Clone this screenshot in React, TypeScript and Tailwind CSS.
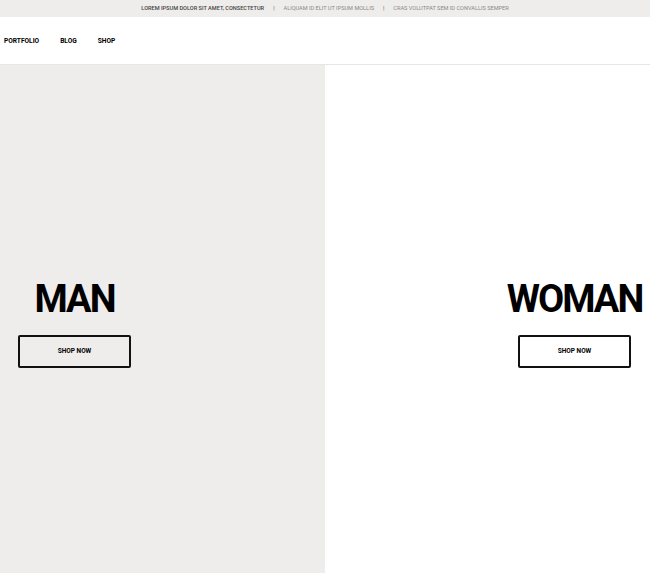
import React from "react";

const topLinks = [
  { text: "Lorem ipsum dolor sit amet, consectetur", dark: true },
  { text: "Aliquam id elit ut ipsum mollis", dark: false },
  { text: "Cras volutpat sem id convallis semper", dark: false },
];

function Panel({ title, side }: { title: string; side: "left" | "right" }) {
  return (
    <div
      className={`flex h-full items-center ${
        side === "left" ? "justify-start bg-[#eeedeb] pl-[18px]" : "justify-end bg-white pr-[19px]"
      }`}
    >
      <div className="flex w-[113px] flex-col items-center pt-[10px]">
        <h2 className="whitespace-nowrap text-[38px] font-bold leading-[38px] tracking-[-2px] text-black">
          {title}
        </h2>
        <button className="mt-[17px] flex h-[33px] w-[113px] items-center justify-center rounded-[2px] border-2 border-[#111] text-[6.5px] font-bold uppercase text-black">
          Shop now
        </button>
      </div>
    </div>
  );
}

export default function App() {
  return (
    <div className="flex h-[573px] w-[650px] flex-col overflow-hidden bg-white font-['Roboto',sans-serif]">
      {/* top strip */}
      <div className="flex h-[17px] shrink-0 items-center justify-center gap-[8px] bg-[#eeedeb] text-[5.6px] uppercase">
        {topLinks.map((l, i) => (
          <React.Fragment key={l.text}>
            {i > 0 && <span className="px-[1px] text-[#555]">|</span>}
            <span className={l.dark ? "font-medium text-[#444]" : "text-[#888]"}>{l.text}</span>
          </React.Fragment>
        ))}
      </div>

      {/* header */}
      <header className="flex h-[48px] shrink-0 items-center gap-[21px] border-b border-[#e6e6e6] pl-[4px] pt-[2px]">
        <a className="text-[6.6px] font-bold uppercase text-black">Portfolio</a>
        <a className="text-[6.6px] font-bold uppercase text-black">Blog</a>
        <a className="text-[6.6px] font-bold uppercase text-black">Shop</a>
      </header>

      {/* split hero */}
      <main className="grid flex-1 grid-cols-[325px_325px]">
        <Panel title="MAN" side="left" />
        <Panel title="WOMAN" side="right" />
      </main>
    </div>
  );
}
